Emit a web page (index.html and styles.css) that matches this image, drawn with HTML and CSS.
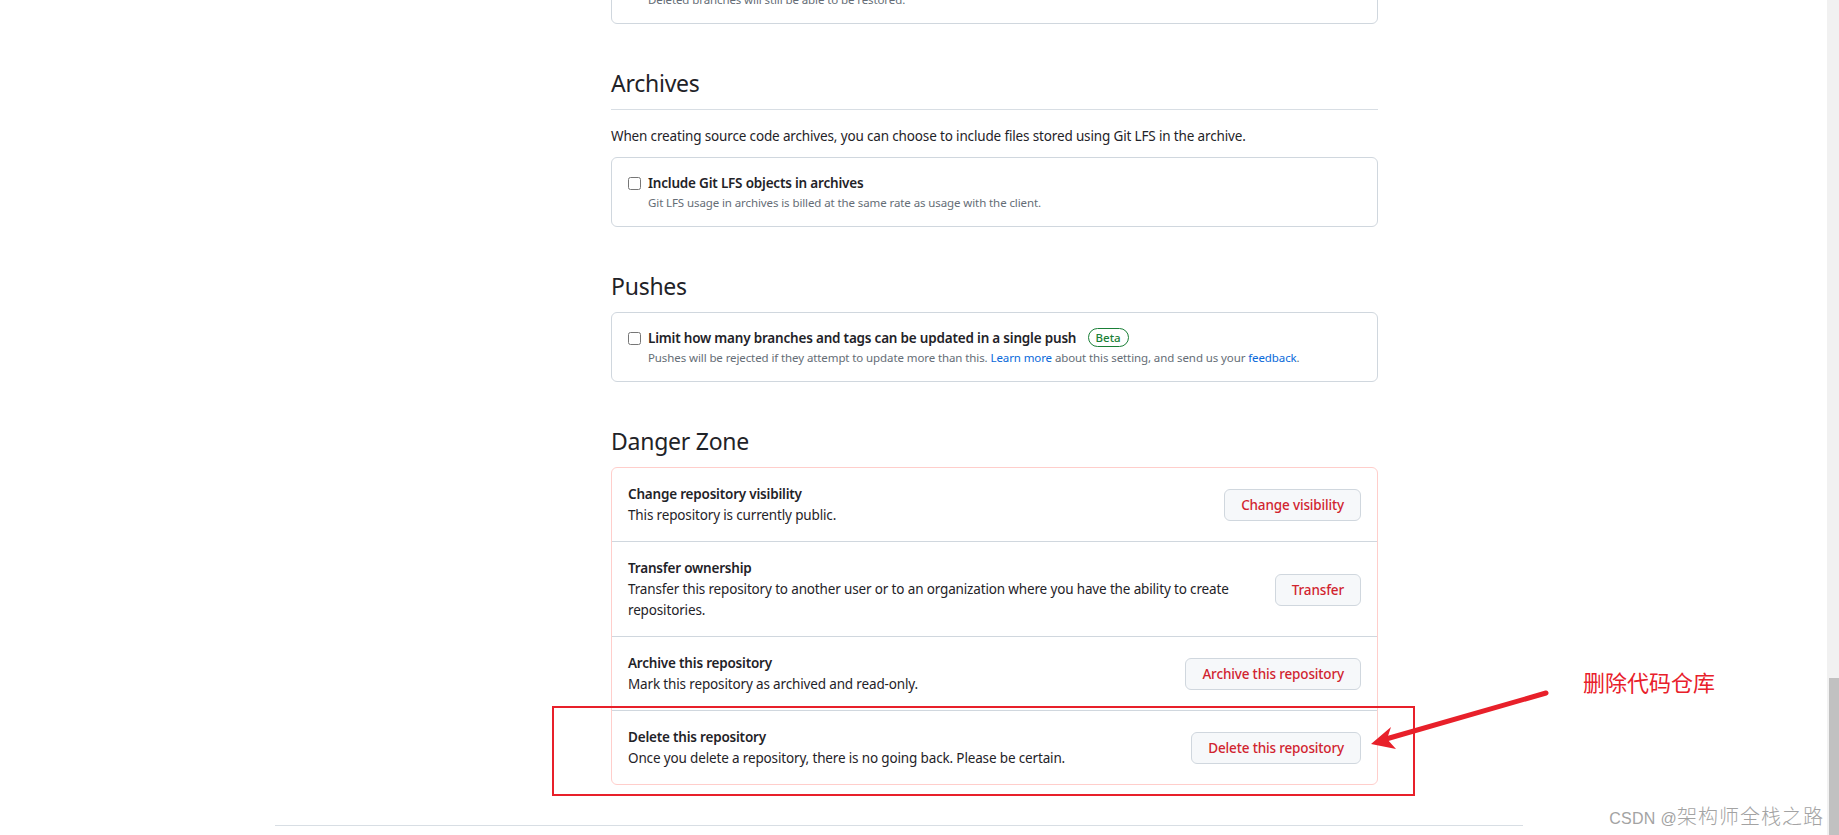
FILE: index.html
```html
<!DOCTYPE html>
<html lang="en">
<head>
<meta charset="utf-8">
<title>Repository settings</title>
<link rel="stylesheet" href="styles.css">
</head>
<body>
<div class="window">
  <div class="viewport">
    <div class="container">
      <div class="settings">
        <aside class="sidebar"></aside>
        <main class="content">
          <div class="box box-prev">
            <div class="option">
              <input type="checkbox" class="check">
              <div class="option-text">
                <div class="option-label">Automatically delete head branches</div>
                <div class="note">Deleted branches will still be able to be restored.</div>
              </div>
            </div>
          </div>

          <h2 class="subhead subhead-rule">Archives</h2>
          <p class="lead">When creating source code archives, you can choose to include files stored using Git LFS in the archive.</p>
          <div class="box">
            <div class="option">
              <input type="checkbox" class="check">
              <div class="option-text">
                <div class="option-label">Include Git LFS objects in archives</div>
                <div class="note">Git LFS usage in archives is billed at the same rate as usage with the client.</div>
              </div>
            </div>
          </div>

          <h2 class="subhead">Pushes</h2>
          <div class="box">
            <div class="option">
              <input type="checkbox" class="check">
              <div class="option-text">
                <div class="option-label">Limit how many branches and tags can be updated in a single push <span class="badge">Beta</span></div>
                <div class="note">Pushes will be rejected if they attempt to update more than this. <a href="#" class="link">Learn more</a> about this setting, and send us your <a href="#" class="link">feedback</a>.</div>
              </div>
            </div>
          </div>

          <h2 class="subhead">Danger Zone</h2>
          <div class="box box-danger">
            <div class="danger-row">
              <div class="danger-text">
                <div class="danger-title">Change repository visibility</div>
                <div class="danger-desc">This repository is currently public.</div>
              </div>
              <button class="btn-danger" type="button">Change visibility</button>
            </div>
            <div class="danger-row">
              <div class="danger-text">
                <div class="danger-title">Transfer ownership</div>
                <div class="danger-desc"><span class="nowrap">Transfer this repository to another user or to an organization where you have the ability to create</span><br>repositories.</div>
              </div>
              <button class="btn-danger" type="button">Transfer</button>
            </div>
            <div class="danger-row">
              <div class="danger-text">
                <div class="danger-title">Archive this repository</div>
                <div class="danger-desc">Mark this repository as archived and read-only.</div>
              </div>
              <button class="btn-danger" type="button">Archive this repository</button>
            </div>
            <div class="danger-row">
              <div class="danger-text">
                <div class="danger-title">Delete this repository</div>
                <div class="danger-desc">Once you delete a repository, there is no going back. Please be certain.</div>
              </div>
              <button class="btn-danger" type="button">Delete this repository</button>
            </div>
          </div>
        </main>
      </div>
      <footer class="footer"></footer>
    </div>
  </div>
  <div class="scrollbar"><div class="thumb"></div></div>

  <div class="annot-rect"></div>
  <svg class="annot-arrow" width="1839" height="835" viewBox="0 0 1839 835" xmlns="http://www.w3.org/2000/svg">
    <line x1="1546" y1="693" x2="1386" y2="739" stroke="#e8202a" stroke-width="5" stroke-linecap="round"/>
    <polygon points="1371,744 1391,727 1387,739 1396,749" fill="#e8202a"/>
  </svg>
  <div class="annot-text">删除代码仓库</div>
  <div class="watermark"><span class="wm-latin">CSDN @</span><span class="wm-cjk">架构师全栈之路</span></div>
</div>
</body>
</html>
```

FILE: styles.css
```css
* { box-sizing: border-box; }

html, body {
  margin: 0;
  padding: 0;
  background: #ffffff;
}

body {
  font-family: "Noto Sans", "Open Sans", "Liberation Sans", sans-serif;
  font-size: 13.5px;
  line-height: 21px;
  letter-spacing: -0.15px;
  color: #1f2328;
  overflow: hidden;
}

.window {
  position: relative;
  display: flex;
  width: 1839px;
  height: 835px;
  overflow: hidden;
}

.viewport {
  flex: 1;
  min-width: 0;
}

.container {
  width: 1248px;
  margin-left: 275px;
}

.settings {
  display: grid;
  grid-template-columns: 336px 767px;
}

.box {
  border: 1px solid #d0d7de;
  border-radius: 6px;
  background: #ffffff;
}

.box-prev {
  margin-top: -46px;
}

.option {
  display: flex;
  align-items: flex-start;
  gap: 7px;
  padding: 15px 16px 14px;
}

.check {
  width: 13px;
  height: 13px;
  margin: 4px 0 0 0;
  flex: none;
}

.option-label {
  font-weight: 600;
  letter-spacing: -0.2px;
}

.note {
  font-size: 11.5px;
  line-height: 18px;
  letter-spacing: -0.1px;
  color: #656d76;
}

.link {
  color: #0969da;
  text-decoration: none;
}

.badge {
  display: inline-block;
  margin-left: 8px;
  padding: 0 7px;
  border: 1px solid #1a7f37;
  border-radius: 2em;
  color: #1a7f37;
  font-size: 11.5px;
  font-weight: 500;
  letter-spacing: 0;
  line-height: 17px;
  vertical-align: 1px;
}

.subhead {
  margin: 41px 0 0;
  padding-bottom: 8px;
  font-size: 23px;
  line-height: 36px;
  font-weight: 400;
  letter-spacing: -0.25px;
}

.subhead-rule {
  border-bottom: 1px solid #d8dee4;
}

.lead {
  margin: 16px 0 10px;
}

.box-danger {
  border-color: #ffcecb;
}

.danger-row {
  display: flex;
  align-items: center;
  gap: 16px;
  padding: 16px 16px 15px;
  border-top: 1px solid #d0d7de;
}

.danger-row:first-child {
  border-top: none;
}

.danger-text {
  flex: 1;
  min-width: 0;
}

.danger-title {
  font-weight: 600;
  letter-spacing: -0.2px;
}

.nowrap {
  white-space: nowrap;
}

.btn-danger {
  flex: none;
  height: 32px;
  padding: 0 16px;
  border: 1px solid #d0d7de;
  border-radius: 6px;
  background: #f6f8fa;
  color: #d1242f;
  font-family: inherit;
  font-size: 13.5px;
  font-weight: 500;
  letter-spacing: -0.15px;
  line-height: 20px;
  cursor: pointer;
}

.footer {
  margin-top: 40px;
  border-top: 1px solid #d8dee4;
  height: 40px;
}

.scrollbar {
  position: relative;
  width: 12px;
  flex: none;
  background: #f1f1f1;
}

.thumb {
  position: absolute;
  left: 2px;
  right: 0;
  top: 678px;
  bottom: 0;
  background: #c1c1c1;
}

.annot-rect {
  position: absolute;
  left: 552px;
  top: 706px;
  width: 863px;
  height: 90px;
  border: 2px solid #e8202a;
}

.annot-arrow {
  position: absolute;
  left: 0;
  top: 0;
  pointer-events: none;
}

.annot-text {
  position: absolute;
  left: 1583px;
  top: 667px;
  font-family: "Noto Sans CJK SC", sans-serif;
  font-size: 22px;
  line-height: 28px;
  letter-spacing: 0;
  color: #e8202a;
}

.watermark {
  position: absolute;
  right: 15px;
  top: 804px;
  line-height: 24px;
  color: #a3a3a3;
  white-space: nowrap;
}

.wm-latin {
  font-family: "Liberation Sans", sans-serif;
  font-size: 16px;
  letter-spacing: 0.3px;
}

.wm-cjk {
  font-family: "Noto Sans CJK SC", sans-serif;
  font-size: 20px;
  font-weight: 300;
  letter-spacing: 1px;
}
```
